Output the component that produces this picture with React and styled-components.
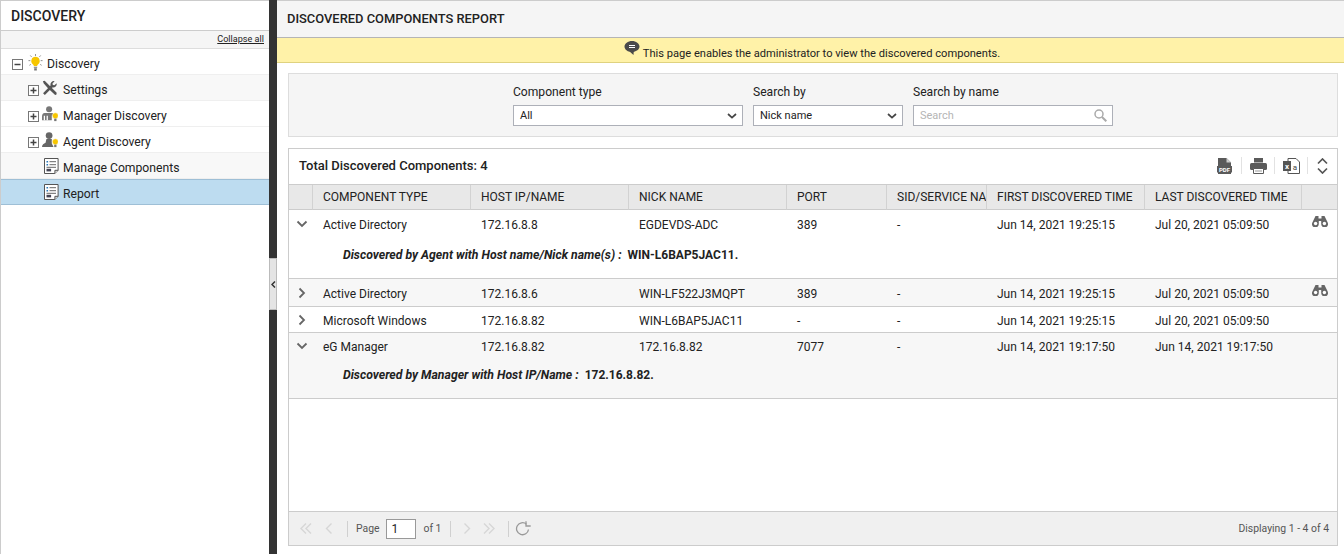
import React from "react";
import styled, { createGlobalStyle } from "styled-components";

const Global = createGlobalStyle`
  html, body { margin: 0; padding: 0; background: #fff; }
  body { font-family: Roboto, "Liberation Sans", sans-serif; color: #222; font-size: 12px; }
  * { box-sizing: border-box; }
`;

const Page = styled.div`display: flex; width: 1344px; height: 554px; overflow: hidden;`;

const Sidebar = styled.aside`width: 269px; flex: none; border-top: 1px solid #ccc; border-left: 1px solid #ccc; background: #fff;`;
const SideTitle = styled.div`height: 29px; padding-left: 10px; display: flex; align-items: center; font-size: 14px; font-weight: 500; color: #222; background: #fff; border-bottom: 1px solid #ccc; box-sizing: content-box;`;
const CollapseBar = styled.div`height: 18px; background: #f5f5f5; border-bottom: 1px solid #ddd; display: flex; justify-content: flex-end; align-items: center; padding: 0 5px 2px 0;`;
const CollapseLink = styled.a`font-size: 9.1px; color: #222; text-decoration: underline;`;
const TreeRow = styled.div`
  height: 26px; display: flex; align-items: center; font-size: 12.2px; color: #222;
  padding-left: ${p => p.$indent}px;
  padding-top: ${p => p.$selected ? 4 : 5}px;
  background: ${p => p.$selected ? "#bddcf0" : p.$shade ? "#f8f8f8" : "#fff"};
  border-bottom: 1px solid ${p => p.$selected ? "#9ebfd6" : "#efefef"};
  ${p => p.$selected ? "border-top: 1px solid #9ebfd6;" : ""}
`;
const ToggleSlot = styled.span`width: 11px; height: 11px; flex: none; margin-right: ${p => p.$gap}px; display: inline-flex;`;
const IconSlot = styled.span`width: ${p => p.$w}px; height: 18px; flex: none; margin-right: ${p => p.$gap}px; margin-top: -4px; display: inline-flex; align-items: center; justify-content: center;`;

const Splitter = styled.div`width: 8px; flex: none; background: #333; position: relative;`;
const Handle = styled.div`position: absolute; left: 0; top: 258px; width: 8px; height: 52px; background: #e4e4e4; border: 1px solid #bbb; display: flex; align-items: center; justify-content: center; font-size: 0;`;

const Main = styled.main`flex: 1; min-width: 0; display: flex; flex-direction: column; background: #fff;`;
const MainHeader = styled.header`height: 38px; flex: none; background: #f5f5f5; border-top: 1px solid #ccc; border-bottom: 1px solid #b5b5b5; padding: 0 0 2px 10px; display: flex; align-items: center; font-size: 12.9px; font-weight: 500; color: #222;`;
const Notice = styled.div`height: 25px; flex: none; background: #fff2a8; border-bottom: 1px solid #dfd27f; padding: 6px 0 0 4px; display: flex; align-items: center; justify-content: center; font-size: 11.12px; color: #222;`;
const NoticeIcon = styled.span`display: inline-flex; margin: -9px 3px 0 -1px;`;
const Content = styled.div`flex: 1; min-height: 0; padding: 10px 6px 8px 11px; display: flex; flex-direction: column; gap: 11px;`;

const FilterBox = styled.section`height: 64px; flex: none; background: #f5f5f5; border: 1px solid #ddd; padding: 10px 0 0 224px; display: flex; gap: 10px;`;
const Field = styled.div`display: flex; flex-direction: column; width: ${p => p.$w}px;`;
const FieldLabel = styled.label`font-size: 12.1px; color: #222; line-height: 14px; height: 21px; padding-top: 1px;`;
const Control = styled.div`height: 21px; background: #fff; border: 1px solid #adb0b8; display: flex; align-items: center; justify-content: space-between; padding: 0 5px 0 6px; font-size: 11px; color: ${p => p.$muted ? "#b5b5b5" : "#222"};`;

const ReportBox = styled.section`flex: 1; min-height: 0; border: 1px solid #ccc; display: flex; flex-direction: column; background: #fff;`;
const ReportTop = styled.div`height: 36px; flex: none; display: flex; align-items: center; justify-content: space-between; padding: 0 0 2px 10px; border-bottom: 1px solid #ccc;`;
const Total = styled.div`font-size: 13px; font-weight: 500; color: #222;`;
const Tools = styled.div`display: flex; align-items: center;`;
const Tool = styled.span`display: inline-flex; width: ${p => p.$last ? 30 : 33}px; height: 17px; align-items: center; justify-content: center; border-left: ${p => p.$first ? "0" : "1px solid #e2e2e2"};`;

const TableWrap = styled.div`flex: 1; min-height: 0;`;
const Table = styled.table`width: 100%; table-layout: fixed; border-collapse: separate; border-spacing: 0; font-size: 12px; color: #222;`;
const Th = styled.th`height: 25px; background: #e8e8e8; border-right: 1px solid #d2d2d2; border-bottom: 1px solid #ccc; font-weight: 400; text-align: left; padding: 0 0 0 10px; white-space: nowrap; overflow: hidden; font-size: 12px; &:last-child { border-right: 0; }`;
const Tr = styled.tr`background: ${p => p.$shade ? "#f7f7f7" : "#fff"};`;
const Td = styled.td`height: ${p => p.$h}px; padding: ${p => p.$top}px 0 0 10px; vertical-align: top; white-space: nowrap; overflow: hidden; line-height: 14px; border-bottom: ${p => p.$line ? "1px solid #ccc" : "0"};`;
const ExpandCell = styled(Td)`padding-left: 7px; padding-top: ${p => p.$top}px;`;
const EyeCell = styled(Td)`padding-left: 10px; padding-top: ${p => p.$top - 2}px;`;
const DetailCell = styled.td`height: ${p => p.$h}px; vertical-align: top; padding: ${p => p.$top}px 0 0 54px; font-weight: 700; border-bottom: 1px solid #ccc; line-height: 14px;`;
const DetailLabel = styled.em`font-style: italic; font-weight: 700; font-size: 12.25px; margin-right: 2px;`;
const DetailValue = styled.span`margin-left: 4px;`;

const Pager = styled.footer`height: 34px; flex: none; background: #f0f0f0; border-top: 1px solid #ccc; display: flex; align-items: center; padding: 0 8px 0 10px; font-size: 10.4px; color: #555;`;
const PagerGroup = styled.div`display: flex; align-items: center; flex: 1;`;
const PagerIcon = styled.span`display: inline-flex; width: ${p => p.$w}px; justify-content: center;`;
const Sep = styled.span`width: 1px; height: 16px; background: #d0d0d0; margin: 0 ${p => p.$r}px 0 ${p => p.$l}px;`;
const PageInput = styled.span`width: 30px; height: 20px; margin: 0 8px 0 6px; border: 1px solid #999; background: #fff; color: #222; padding-left: 5px; line-height: 18px; font-size: 12px;`;

const Toggle = ({ open }) => (
  <svg width="11" height="11" viewBox="0 0 11 11"><rect x=".5" y=".5" width="10" height="10" fill="#fff" stroke="#777"/><path d={open ? "M2.5 5.5h6" : "M2.5 5.5h6M5.5 2.5v6"} stroke="#444" strokeWidth="1.5"/></svg>
);
const Bulb = () => (
  <svg width="15" height="17" viewBox="0 0 16 18">
    <g stroke="#888" strokeWidth="1"><path d="M8 0v2M2.500 1.500l1.300 1.500M13.500 1.500 12.200 3M0.500 7h2M13.500 7h2M1.500 12l1.500-1M14.500 12 13 11"/></g>
    <path d="M8 3a4.400 4.400 0 0 0-2.600 8c.6.5.8 1.200.8 1.800h3.600c0-.6.2-1.300.8-1.800A4.400 4.400 0 0 0 8 3z" fill="#f7c600"/>
    <path d="M6.200 13.500h3.600v1.100H6.200zM6.600 15h2.800v2.400H6.600z" fill="#777"/>
  </svg>
);
const Tools2 = () => (
  <svg width="16" height="16" viewBox="0 0 18 18" fill="#555">
    <path d="M1 1.500 3 .8l6.500 6.500 7 7-.2 2-1.500.6L7 9.500 2 4z" />
    <path d="M16.500 3.600 14 6l-1.800-.4-.4-1.800L14.200 1.300a4 4 0 0 0-4.600 5L1.200 14.800l2 2 8.500-8.400a4 4 0 0 0 4.800-4.800z"/>
  </svg>
);
const SmallBulb = () => (
  <g>
    <circle cx="15" cy="11" r="3.400" fill="#f7c600" stroke="#fff" strokeWidth=".6"/>
    <rect x="13.700" y="14.200" width="2.600" height="2.800" fill="#777"/>
  </g>
);
const ManagerIcon = () => (
  <svg width="16" height="16" viewBox="0 0 18 18" fill="#777">
    <circle cx="8" cy="3.600" r="3.400"/>
    <path d="M3 8h9l1 2-2 1v5H0v-4c0-2 1-4 3-4z"/>
    <path d="M2 11v5h1.400v-5zM5.200 11v5h1.400v-5z" fill="#fff"/>
    <SmallBulb />
  </svg>
);
const AgentIcon = () => (
  <svg width="16" height="16" viewBox="0 0 18 18" fill="#666">
    <circle cx="8" cy="4" r="3.800"/>
    <path d="M5 8h6v5l2 4H0c0-3 2-4 4-5z"/>
    <SmallBulb />
  </svg>
);
const ReportIcon = () => (
  <svg width="15" height="16" viewBox="0 0 15 16">
    <path d="M.5.5h13.600v11.800l-3.200 3.200H.5z" fill="#fff" stroke="#555"/>
    <path d="M10.900 15.500v-3.200h3.200" fill="#ddd" stroke="#555"/>
    <path d="M2.500 3h1.600v1.400H2.500zM2.500 6h1.600v1.400H2.500z" fill="#2a78b8"/>
    <path d="M5.500 3.700h6.500M5.500 6.700h6.500M2.500 9.300h9.500" stroke="#666"/>
    <path d="M2.500 10.800h4.600v2.600H2.500z" fill="#445"/>
  </svg>
);
const Chevron = ({ w = 10 }) => (
  <svg width={w} height="6" viewBox="0 0 10 6"><path d="M1 1l4 3.600L9 1" fill="none" stroke="#444" strokeWidth="1.700"/></svg>
);
const RowChevron = ({ open }) => (
  <svg width="12" height="12" viewBox="0 0 12 12">
    <path d={open ? "M1.500 3.500 6 8l4.500-4.500" : "M3.500 1.500 8 6l-4.500 4.500"} fill="none" stroke="#666" strokeWidth="1.800"/>
  </svg>
);
const Binoculars = () => (
  <svg width="16" height="11" viewBox="0 0 16 11" fill="#666">
    <path d="M3.500 0h3v2.500h3V0h3l3.200 6.500h-.1a3.400 3.400 0 1 1-6.400 1.600V5h-2.400v3.100a3.400 3.400 0 1 1-6.400-1.600z"/>
    <circle cx="3.600" cy="7.500" r="1.700" fill="#fff"/><circle cx="12.400" cy="7.500" r="1.700" fill="#fff"/>
  </svg>
);
const PdfIcon = () => (
  <svg width="15" height="16" viewBox="0 0 15 16">
    <path d="M1 0h8.500L14 4.500V8h1v6.500H14V16H1v-1.500H0V8h1z" fill="#5a5a5a"/><path d="M9.500 0v4.500H14z" fill="#ccc"/>
    <text x="7.500" y="13.500" textAnchor="middle" fontSize="6" fontWeight="700" fill="#fff" fontFamily="Roboto">PDF</text>
  </svg>
);
const PrintIcon = () => (
  <svg width="17" height="16" viewBox="0 0 17 16">
    <path d="M4 0h9v4.500H4z" fill="#5a5a5a"/>
    <rect y="5" width="17" height="7" rx="1.500" fill="#5a5a5a"/>
    <path d="M3.500 10.500h10v5h-10z" fill="#fff" stroke="#5a5a5a"/>
    <path d="M5 13h7" stroke="#999"/>
  </svg>
);
const ExcelIcon = () => (
  <svg width="17" height="16" viewBox="0 0 17 16">
    <path d="M5 .5h8l3.500 3.500v11.500H5z" fill="#fff" stroke="#555"/>
    <path d="M0 3h8v10H0z" fill="#555"/>
    <text x="4" y="10.500" textAnchor="middle" fontSize="8" fontWeight="700" fill="#fff" fontFamily="Roboto">x</text>
    <text x="12" y="12" textAnchor="middle" fontSize="8" fill="#444" fontFamily="Roboto">a</text>
  </svg>
);
const UpDown = () => (
  <svg width="11" height="16" viewBox="0 0 11 16"><path d="M1 5.500l4.500-4.500L10 5.500M1 10.500 5.500 15l4.500-4.500" fill="none" stroke="#555" strokeWidth="1.700"/></svg>
);
const Bubble = () => (
  <svg width="16" height="15" viewBox="0 0 15 15">
    <path d="M7.500 0C3.400 0 0 2.500 0 5.600c0 2.600 2.400 4.800 5.600 5.400l3.400 3 .2-3.100C12.400 10.300 15 8.200 15 5.600 15 2.500 11.600 0 7.500 0z" fill="#4a4a4a"/>
    <path d="M4.500 4.500h6M4.500 6.500h6" stroke="#fff" strokeWidth="1.100"/>
  </svg>
);
const Search = () => (
  <svg width="13" height="13" viewBox="0 0 13 13"><circle cx="5" cy="5" r="4" fill="none" stroke="#aaa" strokeWidth="1.500"/><path d="M8 8l4.300 4.300" stroke="#aaa" strokeWidth="2"/></svg>
);
const Double = ({ dir }) => (
  <svg width="12" height="11" viewBox="0 0 12 11"><path d={dir === "l" ? "M6 .5 1 5.500l5 5M11 .5 6 5.500l5 5" : "M1 .5l5 5-5 5M6 .5l5 5-5 5"} fill="none" stroke="#d6d6d6" strokeWidth="1.400"/></svg>
);
const Single = ({ dir }) => (
  <svg width="8" height="11" viewBox="0 0 8 11"><path d={dir === "l" ? "M6.500 .5 1.500 5.500l5 5" : "M1.500 .5l5 5-5 5"} fill="none" stroke="#d6d6d6" strokeWidth="1.400"/></svg>
);
const Refresh = () => (
  <svg width="16" height="15" viewBox="0 0 16 15"><path d="M13.500 8.500A6 6 0 1 1 11.500 3.200" fill="none" stroke="#999" strokeWidth="1.300"/><path d="M11 .3v4.700h4.700" fill="none" stroke="#999" strokeWidth="1.300"/></svg>
);

const tree = [
  { label: "Settings", icon: <Tools2 />, toggle: true, shade: true },
  { label: "Manager Discovery", icon: <ManagerIcon />, toggle: true },
  { label: "Agent Discovery", icon: <AgentIcon />, toggle: true },
  { label: "Manage Components", icon: <ReportIcon />, shade: true },
  { label: "Report", icon: <ReportIcon />, selected: true },
];
const cols = [24, 158, 158, 158, 100, 100, 158, 157, 35];
const heads = ["", "COMPONENT TYPE", "HOST IP/NAME", "NICK NAME", "PORT", "SID/SERVICE NAME", "FIRST DISCOVERED TIME", "LAST DISCOVERED TIME", ""];
const rows = [
  { c: ["Active Directory", "172.16.8.8", "EGDEVDS-ADC", "389", "-", "Jun 14, 2021 19:25:15", "Jul 20, 2021 05:09:50"], open: true, eye: true, h: 27, top: 8, detail: ["Discovered by Agent with Host name/Nick name(s) :", "WIN-L6BAP5JAC11."], dh: 42, dtop: 11 },
  { c: ["Active Directory", "172.16.8.6", "WIN-LF522J3MQPT", "389", "-", "Jun 14, 2021 19:25:15", "Jul 20, 2021 05:09:50"], eye: true, shade: true, h: 28, top: 8 },
  { c: ["Microsoft Windows", "172.16.8.82", "WIN-L6BAP5JAC11", "-", "-", "Jun 14, 2021 19:25:15", "Jul 20, 2021 05:09:50"], h: 26, top: 7 },
  { c: ["eG Manager", "172.16.8.82", "172.16.8.82", "7077", "-", "Jun 14, 2021 19:17:50", "Jun 14, 2021 19:17:50"], open: true, shade: true, h: 27, top: 7, detail: ["Discovered by Manager with Host IP/Name :", "172.16.8.82."], dh: 39, dtop: 8 },
];

export default function App() {
  return (
    <Page>
      <Global />
      <Sidebar>
        <SideTitle>DISCOVERY</SideTitle>
        <CollapseBar><CollapseLink>Collapse all</CollapseLink></CollapseBar>
        <TreeRow $indent={11}>
          <ToggleSlot $gap={4}><Toggle open /></ToggleSlot>
          <IconSlot $w={16} $gap={4}><Bulb /></IconSlot>
          Discovery
        </TreeRow>
        {tree.map(t => (
          <TreeRow key={t.label} $indent={t.toggle ? 27 : 42} $shade={t.shade} $selected={t.selected}>
            {t.toggle && <ToggleSlot $gap={3}><Toggle /></ToggleSlot>}
            <IconSlot $w={16} $gap={t.toggle ? 5 : 4}>{t.icon}</IconSlot>
            {t.label}
          </TreeRow>
        ))}
      </Sidebar>
      <Splitter>
        <Handle><svg width="5" height="7" viewBox="0 0 5 7"><path d="M4 .5 1 3.500l3 3" fill="none" stroke="#333" strokeWidth="1.500"/></svg></Handle>
      </Splitter>
      <Main>
        <MainHeader>DISCOVERED COMPONENTS REPORT</MainHeader>
        <Notice><NoticeIcon><Bubble /></NoticeIcon>This page enables the administrator to view the discovered components.</Notice>
        <Content>
          <FilterBox>
            <Field $w={230}>
              <FieldLabel>Component type</FieldLabel>
              <Control>All<Chevron /></Control>
            </Field>
            <Field $w={150}>
              <FieldLabel>Search by</FieldLabel>
              <Control>Nick name<Chevron /></Control>
            </Field>
            <Field $w={200}>
              <FieldLabel>Search by name</FieldLabel>
              <Control $muted>Search<Search /></Control>
            </Field>
          </FilterBox>
          <ReportBox>
            <ReportTop>
              <Total>Total Discovered Components: 4</Total>
              <Tools>
                <Tool $first><PdfIcon /></Tool>
                <Tool><PrintIcon /></Tool>
                <Tool><ExcelIcon /></Tool>
                <Tool $last><UpDown /></Tool>
              </Tools>
            </ReportTop>
            <TableWrap>
              <Table>
                <colgroup>{cols.map((w, i) => <col key={i} style={{ width: w }} />)}</colgroup>
                <thead><tr>{heads.map((h, i) => <Th key={i}>{h}</Th>)}</tr></thead>
                <tbody>
                  {rows.map(r => (
                    <React.Fragment key={r.c[2]}>
                      <Tr $shade={r.shade}>
                        <ExpandCell $h={r.h} $top={r.top} $line={!r.detail}><RowChevron open={r.open} /></ExpandCell>
                        {r.c.map((v, i) => <Td key={i} $h={r.h} $top={r.top} $line={!r.detail}>{v}</Td>)}
                        <EyeCell $h={r.h} $top={r.top} $line={!r.detail}>{r.eye && <Binoculars />}</EyeCell>
                      </Tr>
                      {r.detail && (
                        <Tr $shade={r.shade}>
                          <DetailCell colSpan={9} $h={r.dh} $top={r.dtop}>
                            <DetailLabel>{r.detail[0]}</DetailLabel>
                            <DetailValue>{r.detail[1]}</DetailValue>
                          </DetailCell>
                        </Tr>
                      )}
                    </React.Fragment>
                  ))}
                </tbody>
              </Table>
            </TableWrap>
            <Pager>
              <PagerGroup>
                <PagerIcon $w={13}><Double dir="l" /></PagerIcon>
                <PagerIcon $w={34}><Single dir="l" /></PagerIcon>
                <Sep $l={1} $r={8} />
                Page
                <PageInput>1</PageInput>
                of 1
                <Sep $l={9} $r={11} />
                <PagerIcon $w={9}><Single dir="r" /></PagerIcon>
                <PagerIcon $w={36}><Double dir="r" /></PagerIcon>
                <Sep $l={1} $r={6} />
                <Refresh />
              </PagerGroup>
              Displaying 1 - 4 of 4
            </Pager>
          </ReportBox>
        </Content>
      </Main>
    </Page>
  );
}
